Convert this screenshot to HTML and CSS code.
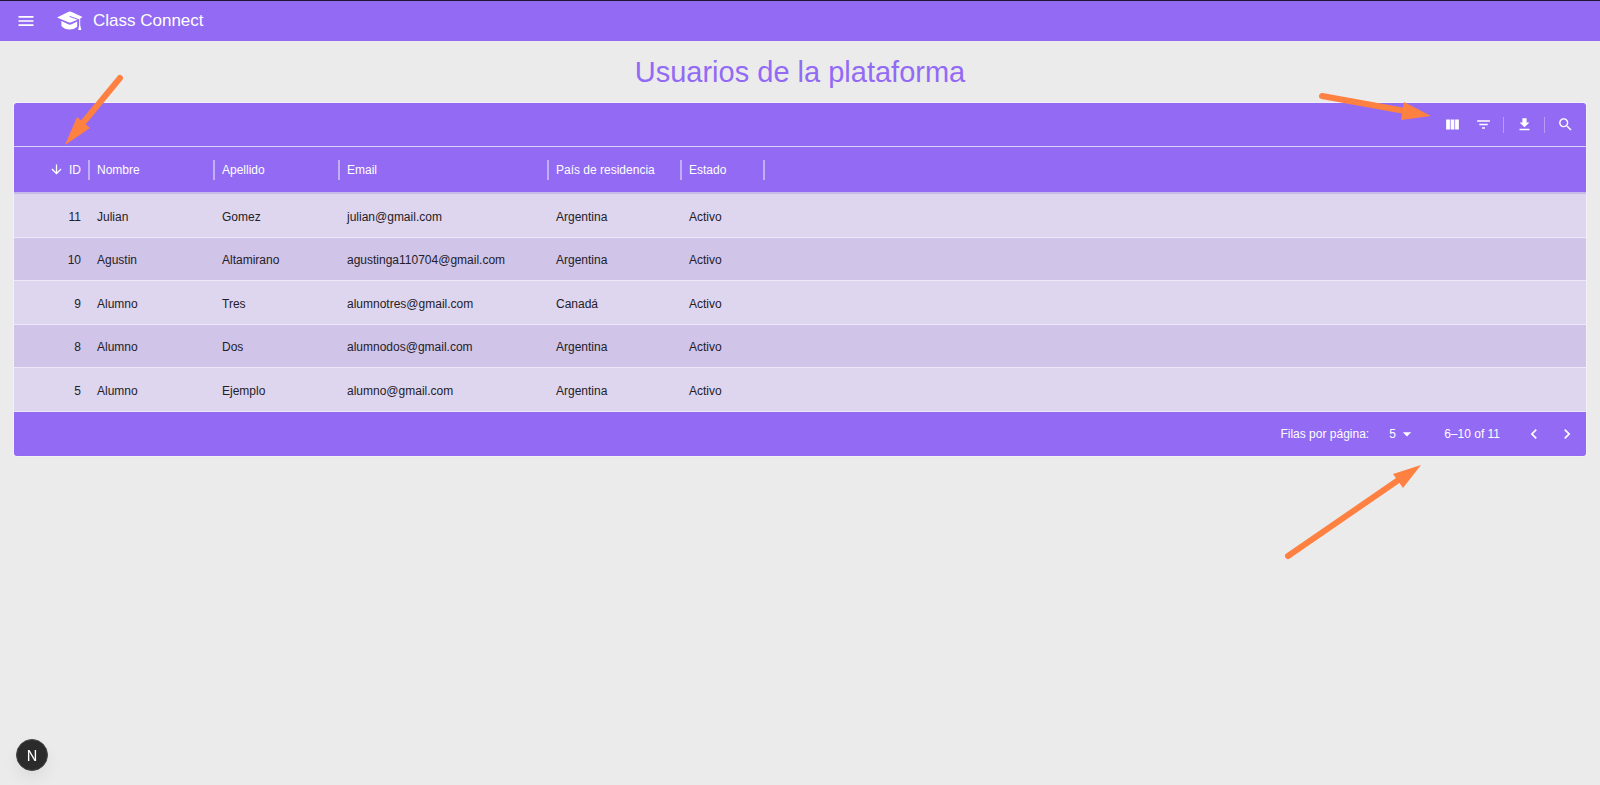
FILE: index.html
```html
<!DOCTYPE html>
<html lang="es">
<head>
  <meta charset="UTF-8" />
  <meta name="viewport" content="width=device-width, initial-scale=1.0"/>
  <title>Class Connect - Usuarios</title>
  <link rel="stylesheet" href="styles.css">
</head>
<body>
  <header class="navbar">
    <button class="icon-btn menu-btn" aria-label="Abrir menú">
      <svg viewBox="0 0 24 24"><path d="M3 18h18v-2H3zm0-5h18v-2H3zm0-7v2h18V6z"/></svg>
    </button>
    <a class="brand" href="#">
      <svg class="logo" viewBox="0 0 26 20">
        <path d="M0 6.6 11.6.8Q12.9.2 14.2.8L25.6 6 23.2 7.4V14.2L24.4 19H21.2L22.2 14.2V8L14.4 11.3Q12.9 11.9 11.4 11.3Z"/>
        <path d="M4.4 10.1 11.2 13.3Q12.9 14 14.6 13.3L20.2 10.6V15.8Q17.3 18.6 12.6 18.6 7.4 18.6 4.4 15Z"/>
        <path class="cord" d="M12.6 5.4 21.6 8.6"/>
      </svg>
      <span>Class Connect</span>
    </a>
  </header>

  <main>
    <h1>Usuarios de la plataforma</h1>

    <section class="grid">
      <div class="toolbar">
        <button class="icon-btn" aria-label="Columnas">
          <svg viewBox="0 0 24 24"><path d="M14.67 5v14H9.33V5zm1 14H21V5h-5.33zm-7.34 0V5H3v14z"/></svg>
        </button>
        <button class="icon-btn" aria-label="Filtros">
          <svg viewBox="0 0 24 24"><path d="M10 18h4v-2h-4zM3 6v2h18V6zm3 7h12v-2H6z"/></svg>
        </button>
        <span class="divider"></span>
        <button class="icon-btn" aria-label="Exportar">
          <svg viewBox="0 0 24 24"><path d="M19 9h-4V3H9v6H5l7 7zM5 18v2h14v-2z"/></svg>
        </button>
        <span class="divider"></span>
        <button class="icon-btn" aria-label="Buscar">
          <svg viewBox="0 0 24 24"><path d="M15.5 14h-.79l-.28-.27C15.41 12.59 16 11.11 16 9.5 16 5.91 13.09 3 9.5 3S3 5.91 3 9.5 5.91 16 9.5 16c1.61 0 3.09-.59 4.23-1.57l.27.28v.79l5 4.99L20.49 19zm-6 0C7.01 14 5 11.99 5 9.5S7.01 5 9.5 5 14 7.01 14 9.5 11.99 14 9.5 14"/></svg>
        </button>
      </div>

      <table>
        <colgroup>
          <col class="col-id"><col class="col-name"><col class="col-name"><col class="col-email"><col class="col-country"><col class="col-state"><col>
        </colgroup>
        <thead>
          <tr>
            <th class="num"><div class="head">
              <svg viewBox="0 0 24 24"><path d="m20 12-1.41-1.41L13 16.17V4h-2v12.17l-5.58-5.59L4 12l8 8z"/></svg>ID</div></th>
            <th><div class="head">Nombre</div></th>
            <th><div class="head">Apellido</div></th>
            <th><div class="head">Email</div></th>
            <th><div class="head">País de residencia</div></th>
            <th><div class="head">Estado</div></th>
            <td></td>
          </tr>
        </thead>
        <tbody>
          <tr><td class="num">11</td><td>Julian</td><td>Gomez</td><td>julian@gmail.com</td><td>Argentina</td><td>Activo</td><td></td></tr>
          <tr><td class="num">10</td><td>Agustin</td><td>Altamirano</td><td>agustinga110704@gmail.com</td><td>Argentina</td><td>Activo</td><td></td></tr>
          <tr><td class="num">9</td><td>Alumno</td><td>Tres</td><td>alumnotres@gmail.com</td><td>Canadá</td><td>Activo</td><td></td></tr>
          <tr><td class="num">8</td><td>Alumno</td><td>Dos</td><td>alumnodos@gmail.com</td><td>Argentina</td><td>Activo</td><td></td></tr>
          <tr><td class="num">5</td><td>Alumno</td><td>Ejemplo</td><td>alumno@gmail.com</td><td>Argentina</td><td>Activo</td><td></td></tr>
        </tbody>
      </table>

      <div class="pagination">
        <label for="rows">Filas por página:</label>
        <div class="select">
          <select id="rows">
            <option selected>5</option>
            <option>10</option>
            <option>25</option>
          </select>
          <svg viewBox="0 0 24 24"><path d="m7 10 5 5 5-5z"/></svg>
        </div>
        <span class="range">6–10 of 11</span>
        <button class="icon-btn page-btn" aria-label="Página anterior">
          <svg viewBox="0 0 24 24"><path d="M15.41 7.41 14 6l-6 6 6 6 1.41-1.41L10.83 12z"/></svg>
        </button>
        <button class="icon-btn page-btn" aria-label="Página siguiente">
          <svg viewBox="0 0 24 24"><path d="M10 6 8.59 7.41 13.17 12l-4.58 4.59L10 18l6-6z"/></svg>
        </button>
      </div>
    </section>
  </main>

  <!-- flechas de ayuda -->
  <svg class="arrow arrow-sort" viewBox="0 0 60 74"><path class="line" d="M57 4 19 50"/><path d="M2 71 14 43 27 54Z"/></svg>
  <svg class="arrow arrow-tools" viewBox="0 0 116 32"><path class="line" d="M5 8 88 23"/><path d="M114 28 87 14 84 32Z"/></svg>
  <svg class="arrow arrow-pages" viewBox="0 0 140 98"><path class="line" d="M5 92 114 17"/><path d="M138 1 110 10 120 24Z"/></svg>

  <button class="dev-badge" aria-label="Herramientas de desarrollo">N</button>
</body>
</html>
```

FILE: styles.css
```css
:root {
  --primary-color: #926af4;
  --bg-color: #ebebeb;
  --row-odd: #ded6ee;
  --row-even: #d0c4e8;
  --line-color: #ede8f8;
  --text-color: #242028;
  --arrow-color: #ff8142;
}
* {
  box-sizing: border-box;
}
body {
  font-family: "Liberation Sans", Arial, sans-serif;
  font-size: 12px;
  margin: 0;
  min-height: 100vh;
  position: relative;
  background-color: var(--bg-color);
  color: var(--text-color);
}
svg {
  display: block;
  fill: currentColor;
}
.icon-btn {
  display: flex;
  align-items: center;
  justify-content: center;
  width: 28px;
  height: 28px;
  padding: 0;
  border: none;
  background: none;
  color: white;
  cursor: pointer;
}
.icon-btn svg {
  width: 17px;
  height: 17px;
}
.navbar {
  display: flex;
  align-items: center;
  gap: 17px;
  height: 41px;
  padding: 0 12px;
  border-top: 1px solid #1d1530;
  background-color: var(--primary-color);
  color: white;
}
.menu-btn svg {
  width: 20px;
  height: 20px;
}
.brand {
  display: flex;
  align-items: center;
  gap: 10px;
  color: white;
  font-size: 17px;
  text-decoration: none;
}
.logo {
  width: 26px;
  height: 20px;
}
.logo .cord {
  fill: none;
  stroke: var(--primary-color);
  stroke-width: 1;
}
main {
  padding: 14px;
}
h1 {
  margin: 0 0 14px;
  color: var(--primary-color);
  font-size: 29px;
  font-weight: normal;
  line-height: 34px;
  text-align: center;
}
.grid {
  border-radius: 3px;
  overflow: hidden;
  background-color: var(--primary-color);
  box-shadow: 0 0 0 1px #f3f1f6;
}
.toolbar {
  display: flex;
  align-items: center;
  justify-content: flex-end;
  gap: 3px;
  height: 44px;
  padding-right: 7px;
  border-bottom: 1px solid #dcd2f8;
}
.divider {
  width: 1px;
  height: 16px;
  margin: 0 3px;
  background-color: #b79df7;
}
table {
  width: 100%;
  border-collapse: separate;
  border-spacing: 0;
  table-layout: fixed;
}
.col-id { width: 76px; }
.col-name { width: 125px; }
.col-email { width: 209px; }
.col-country { width: 133px; }
.col-state { width: 83px; }
th, td {
  height: 43px;
  padding: 2px 9px 0 7px;
  border-bottom: 1px solid var(--line-color);
  text-align: left;
  white-space: nowrap;
}
thead th, thead td {
  height: 47px;
  padding: 0;
  border-bottom: 2px solid #c7b9e8;
  color: white;
  font-weight: normal;
}
.head {
  display: flex;
  align-items: center;
  height: 20px;
  padding: 0 7px;
  border-right: 2px solid #c3aef9;
}
.head svg {
  width: 15px;
  height: 15px;
  margin-right: 5px;
}
.num {
  text-align: right;
}
.num .head {
  justify-content: flex-end;
}
tbody tr {
  background-color: var(--row-even);
}
tbody tr:nth-child(odd) {
  background-color: var(--row-odd);
}
tbody tr:nth-child(odd) td {
  height: 44px;
}
.pagination {
  display: flex;
  align-items: center;
  height: 44px;
  padding-right: 3px;
  color: white;
}
.select {
  display: flex;
  align-items: center;
  position: relative;
  margin: 0 27px 0 20px;
}
.select select {
  width: 28px;
  padding: 0;
  border: none;
  appearance: none;
  background: none;
  color: white;
  font: inherit;
}
.select select option {
  color: var(--text-color);
}
.select svg {
  position: absolute;
  right: 0;
  width: 20px;
  height: 20px;
  pointer-events: none;
}
.pagination label {
  margin-left: auto;
}
.range {
  margin-right: 17px;
}
.page-btn {
  width: 33px;
}
.page-btn svg {
  width: 20px;
  height: 20px;
}
.arrow {
  position: absolute;
  fill: var(--arrow-color);
  pointer-events: none;
}
.arrow .line {
  stroke: var(--arrow-color);
  stroke-width: 6;
  stroke-linecap: round;
}
.arrow-sort {
  top: 74px;
  left: 63px;
  width: 60px;
  height: 74px;
}
.arrow-tools {
  top: 88px;
  right: 167px;
  width: 116px;
  height: 32px;
}
.arrow-pages {
  top: 464px;
  right: 177px;
  width: 140px;
  height: 98px;
}
.dev-badge {
  position: fixed;
  bottom: 14px;
  left: 16px;
  width: 32px;
  height: 32px;
  padding: 0;
  border: 1px solid #4a4a4a;
  border-radius: 50%;
  background-color: #2b2b2b;
  box-shadow: 0 8px 16px rgba(0,0,0,0.06);
  color: white;
  font-family: Inter, sans-serif;
  font-size: 14px;
}
```
